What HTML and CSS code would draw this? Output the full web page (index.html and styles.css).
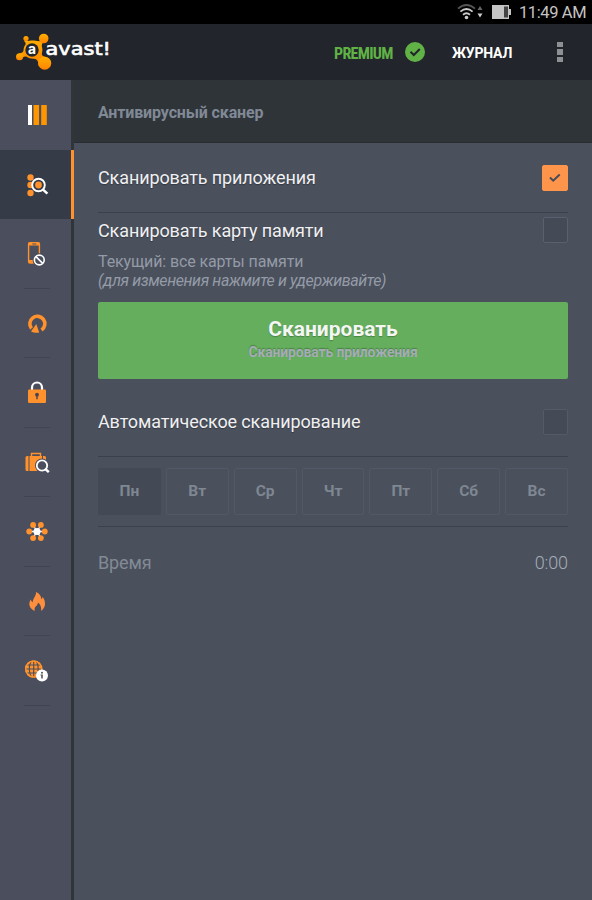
FILE: index.html
```html
<!DOCTYPE html>
<html lang="ru">

<head>
    <meta charset="UTF-8">
    <meta name="viewport" content="width=device-width, initial-scale=1.0">
    <title>Антивирусный сканер</title>

    <link rel="stylesheet" href="styles.css">
</head>

<body>
    <div class="status-bar">
        <svg class="wifi" width="28" height="16" viewBox="0 0 28 16">
            <g fill="none" stroke-width="1.8">
                <path d="M1 4.600Q9.500 -2.600 18 4.600" stroke="#555" />
                <path d="M3.400 7.600Q9.500 2.400 15.600 7.600M6 10.700Q9.500 7.700 13 10.700" stroke="#ccc" />
            </g>
            <circle cx="9.500" cy="13.500" r="1.800" fill="#ccc" />
            <path d="M20.500 6l2.500-4 2.500 4z" fill="#666" />
            <path d="M20.500 9.500l2.500 4 2.500-4z" fill="#ccc" />
        </svg>
        <svg class="battery" width="20" height="14" viewBox="0 0 20 14">
            <path d="M0 0h17v4h2v6h-2v4H0z" fill="#c4c4c4" />
            <path d="M12 1.500h4v11h-4z" fill="#444" />
        </svg>
        <span class="clock">11:49 AM</span>
    </div>

    <header class="header">
        <svg class="logo" width="98" height="40" viewBox="0 0 98 40">
            <defs>
                <linearGradient id="splat" x1="0" y1="0" x2="0" y2="1">
                    <stop offset="0" stop-color="#ffb000" />
                    <stop offset="1" stop-color="#ff8200" />
                </linearGradient>
            </defs>
            <g fill="url(#splat)">
                <path d="M9.500 8.500c1.800.8 3.600.3 5.500 0 3.500-.2 6 .8 8.500.7 1.500-.2 1.600-2 1.500-3.700l6.300 3.500c-3 .8-5.300 1.600-5.500 4-.1 1.700.7 3.200.6 5.200 0 1.600-1 3.600-.2 5 .8 1.200 3 1.700 5.300 2.300l-9 8.500c.2-3.600-.8-6.800-4.500-7.300-3.300.1-5.600-.7-7.500-2-2-.7-3.300.3-4.500 2L3 21.500c2.200-.2 4.300-1 4.500-3.200.2-2.700.8-4.300 2-5.800.6-1.400-.4-2.600-1.500-3.500z" />
                <circle cx="10" cy="6.500" r="2.600" />
                <circle cx="27.700" cy="6.500" r="4.800" />
                <circle cx="3.500" cy="24.800" r="3.500" />
                <circle cx="28.700" cy="31.200" r="6.500" />
            </g>
            <circle cx="16" cy="18" r="6.700" fill="#22252b" />
            <text class="logo-letter" x="12" y="22.300" textLength="8" lengthAdjust="spacingAndGlyphs">a</text>
            <text class="logo-name" x="29.500" y="23.200" textLength="65.500" lengthAdjust="spacingAndGlyphs">avast!</text>
        </svg>
        <span class="premium">PREMIUM</span>
        <svg class="premium-check" width="20" height="20" viewBox="0 0 20 20">
            <circle cx="10" cy="10" r="10" fill="#60b246" />
            <path d="M5.500 9.700l3.300 3.300 6-6" fill="none" stroke="#22252b" stroke-width="2" />
        </svg>
        <span class="journal">ЖУРНАЛ</span>
        <div class="more"><i></i><i></i><i></i></div>
    </header>

    <div class="main">
        <nav class="sidebar">
            <div class="item menu">
                <svg width="28" height="28" viewBox="0 0 28 28">
                    <path d="M4 4h4v20H4z" fill="#fff" />
                    <path d="M9.500 4h5.600v20H9.500zM17.200 4h5.600v20h-5.600z" fill="#ff9600" />
                </svg>
            </div>
            <div class="item active">
                <svg width="28" height="28" viewBox="0 0 28 28">
                    <g fill="#ff922c">
                        <circle cx="6.500" cy="6.500" r="3.200" />
                        <circle cx="6.500" cy="14" r="3.200" />
                        <circle cx="6.500" cy="22" r="3.200" />
                    </g>
                    <circle cx="14.500" cy="14" r="6.300" fill="#353b47" stroke="#fff" stroke-width="1.900" />
                    <circle cx="14.500" cy="14" r="3.400" fill="#ff922c" />
                    <path d="M18.800 18.300l4.600 4.400" stroke="#fff" stroke-width="2.500" />
                </svg>
            </div>
            <div class="item">
                <svg width="28" height="28" viewBox="0 0 28 28">
                    <rect x="4.600" y="2.600" width="10.800" height="20.400" rx="1.500" fill="none" stroke="#ff922c" stroke-width="1.400" />
                    <path d="M4.500 2.500h11v3h-11zM4.500 20h11v3h-11z" fill="#ff922c" />
                    <path d="M8.300 4h4" stroke="#4b4e5d" />
                    <circle cx="15.300" cy="20" r="6.700" fill="#4b4e5d" />
                    <circle cx="15.300" cy="20" r="4.900" fill="none" stroke="#fff" stroke-width="1.600" />
                    <path d="M11.900 16.600l6.800 6.800" stroke="#fff" stroke-width="1.600" />
                </svg>
            </div>
            <div class="item">
                <svg width="28" height="28" viewBox="0 0 28 28">
                    <path d="M7.500 18.500A7.500 7.500 0 1 1 17.500 20" fill="none" stroke="#ff922c" stroke-width="3.600" />
                    <path d="M7 21.500l5.300-7.500 2.900 8.500q-4.500.9-8.200-1z" fill="#ff922c" />
                </svg>
            </div>
            <div class="item">
                <svg width="28" height="28" viewBox="0 0 28 28">
                    <path d="M8 12V8.500a5 5 0 0 1 10 0V12" fill="none" stroke="#fff" stroke-width="2.200" />
                    <rect x="4" y="10.500" width="18" height="13.500" rx="1.200" fill="#ff922c" />
                    <circle cx="13" cy="15.700" r="1.900" fill="#4b4450" />
                    <path d="M12.300 16h1.400v4.300h-1.400z" fill="#4b4450" />
                </svg>
            </div>
            <div class="item">
                <svg width="28" height="28" viewBox="0 0 28 28">
                    <path d="M7.500 8V4.500h9V8" fill="none" stroke="#ff922c" stroke-width="1.400" />
                    <rect x="1.500" y="7" width="20.500" height="15" rx="1.500" fill="#ff922c" />
                    <path d="M5 7v15M18.500 7v15" stroke="#4b4e5d" />
                    <circle cx="18" cy="16.500" r="7" fill="#4b4e5d" />
                    <circle cx="18" cy="16.500" r="5.200" fill="none" stroke="#fff" stroke-width="1.800" />
                    <path d="M21.300 20l3.500 3.200" stroke="#fff" stroke-width="2.500" />
                </svg>
            </div>
            <div class="item">
                <svg width="28" height="28" viewBox="0 0 28 28">
                    <path d="M5.500 13.500h15M9 7l8 13M17 7L9 20" stroke="#fff" stroke-width="1.300" />
                    <g fill="#ff922c">
                        <circle cx="5.200" cy="13.500" r="2.900" />
                        <circle cx="20.800" cy="13.500" r="2.900" />
                        <circle cx="9.100" cy="6.900" r="2.900" />
                        <circle cx="16.900" cy="6.900" r="2.900" />
                        <circle cx="9.100" cy="20.100" r="2.900" />
                        <circle cx="16.900" cy="20.100" r="2.900" />
                    </g>
                    <circle cx="13" cy="13.500" r="3.500" fill="#fff" />
                </svg>
            </div>
            <div class="item">
                <svg width="28" height="28" viewBox="0 0 28 28">
                    <path d="M12 4c3.500 1.600 5.300 4 5.300 7.300.8-.5 1.200-1.300 1.400-2.500 3.300 5 3.400 10.500-1.500 14.200.3-4.300-.7-6.500-3.200-8.500-.3 2-1.200 3-2.300 4-1.200 1.200-1.400 2.700-.9 4.500-5.300-2.200-7-6.800-4-11.400.4 1.600 1 2.300 2 2.700C8.500 10.700 12.500 8 12 4z" fill="#ff8f3c" />
                </svg>
            </div>
            <div class="item">
                <svg width="28" height="28" viewBox="0 0 28 28">
                    <circle cx="9.700" cy="12" r="8.700" fill="#ff922c" />
                    <path d="M2 8h15.500M1 12h17.500M2 16h15.500M9.700 3v18M7.500 3.500q-4.500 8.500 0 17M12 3.500q4.500 8.500 0 17" fill="none" stroke="#4b4e5d" stroke-width="1.100" />
                    <circle cx="9.700" cy="12" r="8" fill="none" stroke="#ff922c" stroke-width="1.400" />
                    <circle cx="18" cy="18.500" r="6" fill="#fff" />
                    <circle cx="18" cy="15.700" r="1" fill="#555" />
                    <path d="M16.500 17.500h2.300v4h-1.600v-3h-.7z" fill="#555" />
                </svg>
            </div>
        </nav>

        <main class="content">
            <h1>Антивирусный сканер</h1>

            <div class="settings">
                <div class="row apps">
                    <span class="label">Сканировать приложения</span>
                    <div class="checkbox checked">
                        <svg width="12" height="10" viewBox="0 0 12 10">
                            <path d="M1 4.500l3.200 3.200 6.500-6.200" fill="none" stroke="#454b59" stroke-width="2" />
                        </svg>
                    </div>
                </div>

                <div class="row card">
                    <div>
                        <span class="label">Сканировать карту памяти</span>
                        <p class="hint">Текущий: все карты памяти<br><em>(для изменения нажмите и удерживайте)</em></p>
                    </div>
                    <div class="checkbox"></div>
                </div>

                <button class="scan">
                    <span class="scan-title">Сканировать</span>
                    <span class="scan-sub">Сканировать приложения</span>
                </button>

                <div class="row auto">
                    <span class="label">Автоматическое сканирование</span>
                    <div class="checkbox dim"></div>
                </div>

                <div class="days">
                    <div class="day selected">Пн</div>
                    <div class="day">Вт</div>
                    <div class="day">Ср</div>
                    <div class="day">Чт</div>
                    <div class="day">Пт</div>
                    <div class="day">Сб</div>
                    <div class="day">Вс</div>
                </div>

                <div class="row time">
                    <span>Время</span>
                    <span class="time-value">0:00</span>
                </div>
            </div>
        </main>
    </div>
</body>

</html>
```
FILE: styles.css
```css
* {
    box-sizing: border-box;
}

body {
    display: flex;
    flex-direction: column;
    height: 100vh;
    margin: 0;
    background-color: #4a505c;
    font-family: Roboto, 'Liberation Sans', sans-serif;
    overflow: hidden;
}

svg {
    display: block;
}

.status-bar {
    display: flex;
    justify-content: flex-end;
    align-items: center;
    height: 24px;
    padding-right: 6px;
    background-color: #000;
    color: #c4c4c4;
}

.wifi {
    margin-right: 7px;
}

.battery {
    margin-right: 7px;
}

.clock {
    width: 67px;
    font-size: 16.5px;
    letter-spacing: -0.4px;
    white-space: nowrap;
}

.header {
    display: flex;
    align-items: center;
    height: 56px;
    padding: 0 29px 0 16px;
    background-color: #22252b;
}

.logo {
    margin-right: auto;
}

.logo-letter {
    font-family: Inter, sans-serif;
    font-size: 14px;
    font-weight: 700;
    fill: #fff;
}

.logo-name {
    font-family: 'DejaVu Sans', sans-serif;
    font-size: 17px;
    fill: #fff;
    stroke: #fff;
    stroke-width: 0.6px;
}

.premium {
    width: 59px;
    padding-top: 2px;
    font-size: 16px;
    font-weight: 700;
    font-stretch: condensed;
    letter-spacing: -0.7px;
    color: #60b246;
}

.premium-check {
    margin: 0 27px 0 12px;
}

.journal {
    width: 61px;
    padding-top: 2px;
    font-size: 14px;
    font-weight: 700;
    letter-spacing: -0.2px;
    color: #fff;
}

.more {
    display: flex;
    flex-direction: column;
    gap: 2px;
    margin-left: 44px;
}

.more i {
    width: 6px;
    height: 5.5px;
    background-color: #8e9093;
}

.main {
    display: flex;
    flex: 1;
}

.sidebar {
    width: 74px;
    border-right: 3px solid #2f363a;
    background-color: #4b4e5d;
}

.item {
    display: flex;
    flex-direction: column;
    align-items: center;
    justify-content: center;
    position: relative;
    height: 69.5px;
    padding: 1px 0 0 4px;
}

.item::after {
    content: '';
    position: absolute;
    left: 24px;
    bottom: 0;
    width: 26px;
    height: 1px;
    background-color: #3f4553;
}

.item.menu {
    padding-top: 0;
}

.item.menu::after,
.item.active::after {
    display: none;
}

.item.active {
    margin-right: -3px;
    border-right: 3px solid #ff922c;
    background-color: #353b47;
}

.content {
    flex: 1;
}

h1 {
    height: 63px;
    margin: 0;
    padding-left: 24px;
    border-bottom: 1px solid #282d31;
    background-color: #2f3439;
    font-size: 16px;
    font-weight: 700;
    line-height: 65px;
    letter-spacing: -0.14px;
    color: #808995;
}

.settings {
    padding: 0 24px;
}

.row {
    display: flex;
    justify-content: space-between;
    align-items: center;
}

.label {
    font-size: 18px;
    line-height: 26px;
    letter-spacing: -0.12px;
    color: #f0f0f2;
    text-shadow: 0 1px 1px rgba(0, 0, 0, 0.3);
}

.apps {
    height: 70px;
    padding-top: 1px;
    border-bottom: 1px solid #3b414c;
}

.checkbox {
    display: flex;
    align-items: center;
    justify-content: center;
    width: 25px;
    height: 26px;
    border: 1px solid #596170;
    border-radius: 2px;
    background-color: #444a56;
}

.checkbox.checked {
    width: 26px;
    border-color: #ff954b;
    background-color: #ff954b;
}

.checkbox.dim {
    border-color: #535b68;
}

.card {
    align-items: flex-start;
    height: 89px;
    padding-top: 5px;
}

.card .checkbox {
    margin-top: -1px;
}

.hint {
    margin: 8px 0 0;
    font-size: 16px;
    line-height: 19px;
    letter-spacing: -0.12px;
    color: #949ba7;
}

.hint em {
    letter-spacing: -0.39px;
}

.scan {
    display: flex;
    flex-direction: column;
    align-items: center;
    width: 100%;
    height: 77px;
    padding: 15px 0 0;
    border: none;
    border-radius: 2px;
    background-color: #64ae5d;
    font-family: inherit;
}

.scan-title {
    font-size: 21px;
    font-weight: 700;
    line-height: 25px;
    color: #f4f6f4;
    text-shadow: 0 1px 1px rgba(0, 0, 0, 0.25);
}

.scan-sub {
    font-size: 14px;
    font-weight: 700;
    line-height: 21px;
    letter-spacing: -0.15px;
    color: #a5acb6;
    text-shadow: 0 -1px 1px rgba(0, 0, 0, 0.25);
}

.auto {
    height: 78px;
    padding-top: 8px;
    border-bottom: 1px solid #3b414c;
}

.days {
    display: grid;
    grid-template-columns: repeat(7, 1fr);
    gap: 5px;
    padding: 11px 0;
    border-bottom: 1px solid #3b414c;
}

.day {
    height: 47px;
    border: 1px solid #525868;
    border-radius: 2px;
    font-size: 15.5px;
    font-weight: 700;
    line-height: 45px;
    text-align: center;
    color: #7e8792;
}

.day.selected {
    border-color: #444a55;
    background-color: #444a55;
}

.time {
    height: 70px;
    font-size: 18px;
    letter-spacing: -0.1px;
    color: #828a96;
}

.time-value {
    font-weight: 300;
    color: #a5acb7;
}
```
